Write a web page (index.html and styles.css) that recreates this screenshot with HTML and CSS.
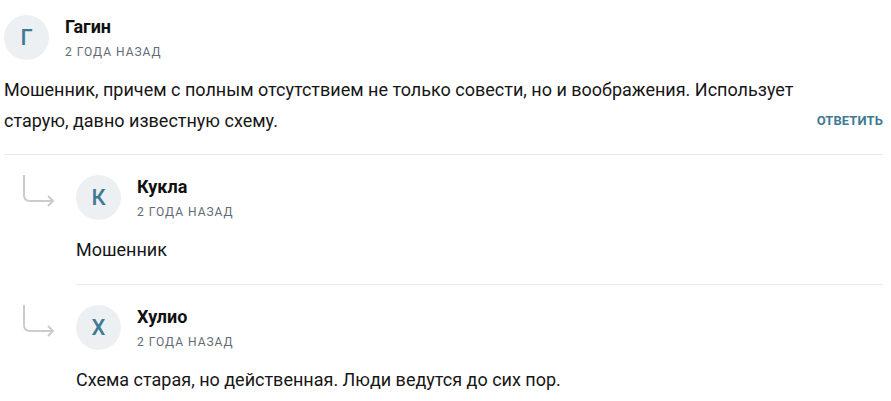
FILE: index.html
```html
<!DOCTYPE html>
<html lang="ru">
<head>
<meta charset="utf-8">
<link rel="stylesheet" href="styles.css">
</head>
<body>
<div class="thread">
  <div class="comment main">
    <div class="head">
      <div class="avatar">Г</div>
      <div class="meta">
        <div class="name">Гагин</div>
        <div class="date">2 года назад</div>
      </div>
    </div>
    <div class="body-row">
      <p class="text">Мошенник, причем с полным отсутствием не только совести, но и воображения. Использует старую, давно известную схему.</p>
      <a class="reply-btn">Ответить</a>
    </div>
  </div>
  <div class="reply">
    <svg class="arrow" viewBox="0 0 32 32" width="32" height="32"><path d="M1 0 V20 Q1 26 7 26 H30 M25 21 L30 26 L25 31" fill="none" stroke="#c9cdd1" stroke-width="2"/></svg>
    <div class="comment sub">
      <div class="head">
        <div class="avatar">К</div>
        <div class="meta">
          <div class="name">Кукла</div>
          <div class="date">2 года назад</div>
        </div>
      </div>
      <p class="text">Мошенник</p>
    </div>
  </div>
  <div class="reply">
    <svg class="arrow" viewBox="0 0 32 32" width="32" height="32"><path d="M1 0 V20 Q1 26 7 26 H30 M25 21 L30 26 L25 31" fill="none" stroke="#c9cdd1" stroke-width="2"/></svg>
    <div class="comment sub last">
      <div class="head">
        <div class="avatar">Х</div>
        <div class="meta">
          <div class="name">Хулио</div>
          <div class="date">2 года назад</div>
        </div>
      </div>
      <p class="text">Схема старая, но действенная. Люди ведутся до сих пор.</p>
    </div>
  </div>
</div>
</body>
</html>
```
FILE: styles.css
```css
html, body {
  margin: 0;
  padding: 0;
  background: #fff;
}
body {
  font-family: Roboto, "Liberation Sans", sans-serif;
  color: #161616;
}
.thread {
  width: 879px;
  padding: 15px 0 0 4px;
}
.comment {
  border-bottom: 1px solid #e9e9e9;
  padding-bottom: 18px;
}
.comment.last {
  border-bottom: none;
}
.head {
  display: flex;
  align-items: flex-start;
}
.avatar {
  width: 45px;
  height: 45px;
  border-radius: 50%;
  background: #edf0f3;
  color: #3f7a94;
  font-size: 22px;
  font-weight: 500;
  line-height: 45px;
  text-align: center;
  flex: none;
}
.meta {
  margin-left: 16px;
  padding-top: 1px;
}
.name {
  font-size: 18px;
  font-weight: 700;
  line-height: 22px;
  color: #111;
}
.date {
  margin-top: 6px;
  font-size: 12px;
  line-height: 16px;
  letter-spacing: 1px;
  text-transform: uppercase;
  color: #5f6b75;
  font-weight: 400;
}
.text {
  margin: 14px 0 0;
  font-size: 18px;
  line-height: 31px;
}
.body-row {
  display: flex;
  align-items: flex-end;
  justify-content: space-between;
}
.body-row .text {
  width: 790px;
}
.reply-btn {
  font-size: 13px;
  font-weight: 700;
  letter-spacing: 0.1px;
  text-transform: uppercase;
  color: #3f7a94;
  line-height: 31px;
}
.reply {
  display: flex;
  padding-top: 20px;
}
.arrow {
  flex: none;
  margin-left: 19px;
  margin-right: 21px;
}
.sub {
  flex: 1;
  padding-bottom: 19px;
}
```
